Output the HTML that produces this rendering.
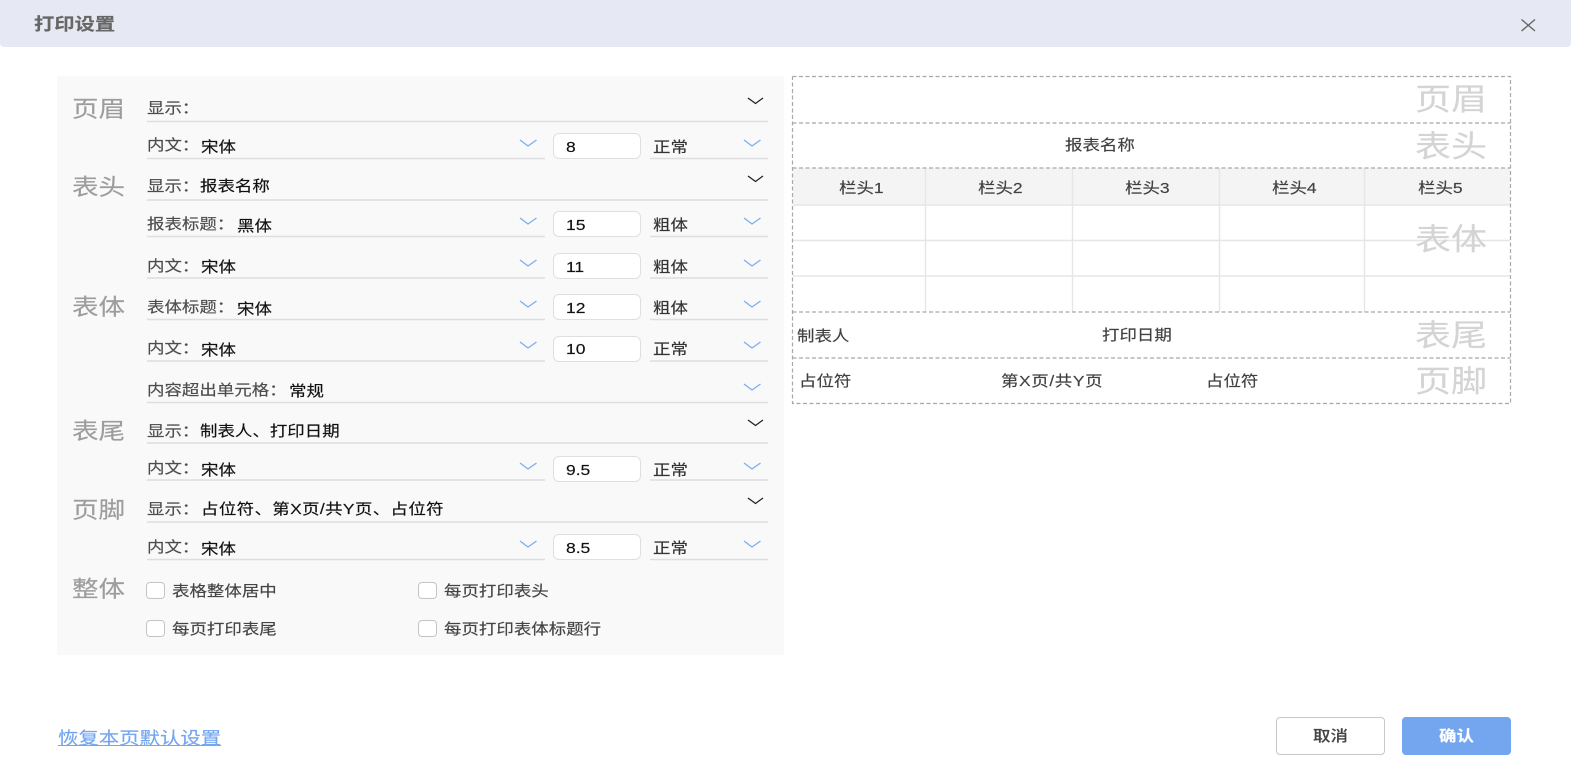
<!DOCTYPE html>
<html lang="zh-CN"><head><meta charset="utf-8"><title>打印设置</title>
<style>
html,body{margin:0;padding:0;background:#fff}
#p{position:relative;width:1571px;height:770px;overflow:hidden;background:#fff;font-family:"Liberation Sans","Noto Sans CJK SC",sans-serif}
.t{position:absolute;white-space:nowrap;height:20px;line-height:20px;margin-top:1.5px;font-size:14.8px;color:#4d4d4d;transform:scaleX(1.18);transform-origin:left center;-webkit-text-stroke:.15px currentColor}
.v{color:#111}
.l{font-size:22.5px;line-height:30px;height:30px;color:#9d9d9d;margin-top:1px}
.w{font-size:30.5px;line-height:40px;height:40px;color:#d4d4d4;margin-top:2px}
.r{color:#404040}
.i{position:absolute;box-sizing:border-box;left:553px;width:88px;height:26px;background:#fff;border:1.4px solid #dfdfdf;border-radius:6px}
.c{position:absolute;box-sizing:border-box;width:19px;height:17px;background:#fff;border:1.3px solid #c4c4c4;border-radius:4px}
svg{position:absolute;left:0;top:0}
</style></head><body><div id="p">
<div style="position:absolute;left:0;top:0;width:1571px;height:47px;background:#e6e9f3;border-radius:0 0 4px 4px"></div>
<div class="t" style="left:34px;top:12.500px;font-size:17.200px;font-weight:bold;color:#666">打印设置</div>
<div style="position:absolute;left:57px;top:76px;width:727px;height:579px;background:#f9f9f9"></div>

<svg width="1571" height="770" fill="none">
<path d="M1521.500 19.500L1535 31M1535 19.500L1521.500 31" stroke="#666" stroke-width="1.4"/>
<g stroke="#dedede" stroke-width="1.4">
<path d="M147 121.500H768M147 200H768M147 402.500H768M147 443H768M147 522H768"/>
<path d="M147 158.500H545M650 158.500H768M147 236.500H545M650 236.500H768M147 278H545M650 278H768M147 319.500H545M650 319.500H768M147 361H545M650 361H768M147 480H545M650 480H768M147 559.500H545M650 559.500H768"/>
</g>
<g stroke="#222" stroke-width="1.3">
<path d="M748 98L755.500 103.500L763 98M748 176L755.500 181.500L763 176M748 420L755.500 425.500L763 420M748 498L755.500 503.500L763 498"/>
</g>
<g stroke="#7badf2" stroke-width="1.3">
<path d="M520 140L528 146L536.500 140M744 140L752 146L760.500 140M520 218L528 224L536.500 218M744 218L752 224L760.500 218M520 260L528 266L536.500 260M744 260L752 266L760.500 260M520 301L528 307L536.500 301M744 301L752 307L760.500 301M520 342L528 348L536.500 342M744 342L752 348L760.500 342M744 384L752 390L760.500 384M520 463L528 469L536.500 463M744 463L752 469L760.500 463M520 541L528 547L536.500 541M744 541L752 547L760.500 541"/>
</g>
<rect x="793" y="168" width="717" height="37" fill="#f4f4f4"/>
<g stroke="#e6e6e6" stroke-width="1.400">
<path d="M925.500 168V312M1072.500 168V312M1219.500 168V312M1364.500 168V312M793 205H1510M793 240.500H1510M793 276H1510"/>
</g>
<g stroke="#a8a8a8" stroke-width="1.2" stroke-dasharray="4 2.500">
<path d="M792.500 76.500H1510.500V403.500H792.500V76.500M792.500 123H1510.500M792.500 168H1510.500M792.500 312H1510.500M792.500 358H1510.500"/>
</g>
</svg>

<div class="t l" style="left:72px;top:94px">页眉</div>
<div class="t l" style="left:72px;top:172px">表头</div>
<div class="t l" style="left:72px;top:292px">表体</div>
<div class="t l" style="left:72px;top:416px">表尾</div>
<div class="t l" style="left:72px;top:495px">页脚</div>
<div class="t l" style="left:72px;top:574px">整体</div>

<div class="t" style="left:147px;top:97px">显示：</div>
<div class="t" style="left:147px;top:134px">内文：</div><div class="t v" style="left:201px;top:136px">宋体</div>
<div class="t" style="left:147px;top:175px">显示：</div><div class="t v" style="left:200px;top:175px">报表名称</div>
<div class="t" style="left:147px;top:213px">报表标题：</div><div class="t v" style="left:237px;top:215px">黑体</div>
<div class="t" style="left:147px;top:255px">内文：</div><div class="t v" style="left:201px;top:256px">宋体</div>
<div class="t" style="left:147px;top:296px">表体标题：</div><div class="t v" style="left:237px;top:298px">宋体</div>
<div class="t" style="left:147px;top:337px">内文：</div><div class="t v" style="left:201px;top:339px">宋体</div>
<div class="t" style="left:147px;top:379px">内容超出单元格：</div><div class="t v" style="left:289px;top:380px">常规</div>
<div class="t" style="left:147px;top:420px">显示：</div><div class="t v" style="left:200px;top:420px">制表人、打印日期</div>
<div class="t" style="left:147px;top:457px">内文：</div><div class="t v" style="left:201px;top:459px">宋体</div>
<div class="t" style="left:147px;top:498px">显示：</div><div class="t v" style="left:201px;top:498px;letter-spacing:.3px">占位符、第X页/共Y页、占位符</div>
<div class="t" style="left:147px;top:536px">内文：</div><div class="t v" style="left:201px;top:538px">宋体</div>

<div class="i" style="top:133px"></div><div class="t v" style="left:566px;top:136px">8</div><div class="t" style="left:653px;top:136px;color:#333">正常</div>
<div class="i" style="top:211px"></div><div class="t v" style="left:566px;top:214px">15</div><div class="t" style="left:653px;top:214px;color:#333">粗体</div>
<div class="i" style="top:253px"></div><div class="t v" style="left:566px;top:256px">11</div><div class="t" style="left:653px;top:256px;color:#333">粗体</div>
<div class="i" style="top:294px"></div><div class="t v" style="left:566px;top:297px">12</div><div class="t" style="left:653px;top:297px;color:#333">粗体</div>
<div class="i" style="top:336px"></div><div class="t v" style="left:566px;top:338px">10</div><div class="t" style="left:653px;top:338px;color:#333">正常</div>
<div class="i" style="top:456px"></div><div class="t v" style="left:566px;top:459px">9.5</div><div class="t" style="left:653px;top:459px;color:#333">正常</div>
<div class="i" style="top:534px"></div><div class="t v" style="left:566px;top:537px">8.5</div><div class="t" style="left:653px;top:537px;color:#333">正常</div>

<div class="c" style="left:146px;top:581.500px"></div><div class="t" style="left:172px;top:580px;color:#444">表格整体居中</div>
<div class="c" style="left:418px;top:581.500px"></div><div class="t" style="left:444px;top:580px;color:#444">每页打印表头</div>
<div class="c" style="left:146px;top:619.500px"></div><div class="t" style="left:172px;top:618px;color:#444">每页打印表尾</div>
<div class="c" style="left:418px;top:619.500px"></div><div class="t" style="left:444px;top:618px;color:#444">每页打印表体标题行</div>

<div class="t r" style="left:1065px;top:134px">报表名称</div>
<div class="t r" style="left:839px;top:177px">栏头1</div>
<div class="t r" style="left:978px;top:177px">栏头2</div>
<div class="t r" style="left:1125px;top:177px">栏头3</div>
<div class="t r" style="left:1272px;top:177px">栏头4</div>
<div class="t r" style="left:1418px;top:177px">栏头5</div>
<div class="t r" style="left:797px;top:325px">制表人</div>
<div class="t r" style="left:1102px;top:324px">打印日期</div>
<div class="t r" style="left:799px;top:370px">占位符</div>
<div class="t r" style="left:1001px;top:370px;letter-spacing:.5px">第X页/共Y页</div>
<div class="t r" style="left:1206px;top:370px">占位符</div>

<div class="t w" style="left:1415px;top:78px">页眉</div>
<div class="t w" style="left:1415px;top:125px">表头</div>
<div class="t w" style="left:1415px;top:218px">表体</div>
<div class="t w" style="left:1415px;top:314px">表尾</div>
<div class="t w" style="left:1415px;top:360px">页脚</div>

<div class="t" style="left:58px;top:726px;font-size:17.300px;color:#74a6f0;text-decoration:underline">恢复本页默认设置</div>
<div style="position:absolute;box-sizing:border-box;left:1276px;top:717px;width:109px;height:38px;border:1.500px solid #c8c8c8;border-radius:4px;background:#fff"></div>
<div class="t" style="left:1313px;top:725px;color:#444;font-weight:500">取消</div>
<div style="position:absolute;left:1402px;top:717px;width:109px;height:38px;border-radius:4px;background:#74a6f0"></div>
<div class="t" style="left:1439px;top:725px;color:#fff;font-weight:bold">确认</div>
</div></body></html>
